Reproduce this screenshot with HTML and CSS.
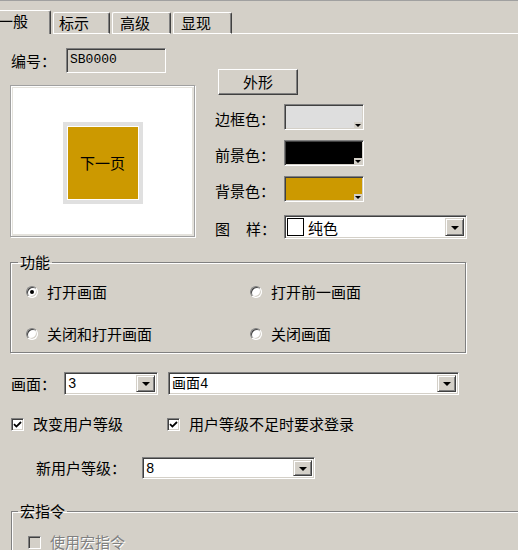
FILE: index.html
```html
<!DOCTYPE html>

<html>
<head>
    <title>按钮属性</title>
    <meta charset="UTF-8">
    <link rel="stylesheet" href="styles.css">
</head>
<body>

<div class="tabs">
    <div class="tab active">一般</div>
    <div class="tab">标示</div>
    <div class="tab">高级</div>
    <div class="tab">显现</div>
    <div class="tab-rest"></div>
</div>

<div class="page">
    <div class="top">
        <div class="left">
            <div class="id-row">
                <span class="id-label">编号：</span>
                <div class="textbox">SB0000</div>
            </div>
            <div class="preview">
                <div class="canvas">
                    <div class="sample">
                        <div class="sample-face">下一页</div>
                    </div>
                </div>
            </div>
        </div>

        <div class="right">
            <div class="button">外形</div>
            <div class="color-row first">
                <span class="label">边框色：</span>
                <div class="swatch light"><span class="pick"></span></div>
            </div>
            <div class="color-row">
                <span class="label">前景色：</span>
                <div class="swatch black"><span class="pick"></span></div>
            </div>
            <div class="color-row">
                <span class="label">背景色：</span>
                <div class="swatch gold"><span class="pick"></span></div>
            </div>
            <div class="color-row pattern-row">
                <span class="label"><span class="wide">图</span>样：</span>
                <div class="combo pattern">
                    <span class="chip"></span>
                    <span class="value cjk">纯色</span>
                    <span class="drop"></span>
                </div>
            </div>
        </div>
    </div>

    <fieldset class="group func">
        <legend>功能</legend>
        <div class="radios">
            <label class="option"><span class="radio checked"></span>打开画面</label>
            <label class="option"><span class="radio"></span>打开前一画面</label>
            <label class="option"><span class="radio"></span>关闭和打开画面</label>
            <label class="option"><span class="radio"></span>关闭画面</label>
        </div>
    </fieldset>

    <div class="screen-row">
        <span class="screen-label">画面：</span>
        <div class="combo screen-no">
            <span class="value">3</span>
            <span class="drop"></span>
        </div>
        <div class="combo screen-name">
            <span class="value">画面4</span>
            <span class="drop"></span>
        </div>
    </div>

    <div class="checks-row">
        <label class="option check-first">
            <span class="check"><svg width="9" height="9" viewBox="0 0 9 9"><path d="M1 4.2 L3.4 6.6 L8 2" fill="none" stroke="#000" stroke-width="1.8"/></svg></span>
            改变用户等级
        </label>
        <label class="option">
            <span class="check"><svg width="9" height="9" viewBox="0 0 9 9"><path d="M1 4.2 L3.4 6.6 L8 2" fill="none" stroke="#000" stroke-width="1.8"/></svg></span>
            用户等级不足时要求登录
        </label>
    </div>

    <div class="level-row">
        <span class="level-label">新用户等级：</span>
        <div class="combo level">
            <span class="value">8</span>
            <span class="drop"></span>
        </div>
    </div>

    <fieldset class="group macro">
        <legend>宏指令</legend>
        <label class="option disabled">
            <span class="check off"></span>
            使用宏指令
        </label>
    </fieldset>
</div>

</body>
</html>
```

FILE: styles.css
```css
html,
body{
    height: 550px;
    overflow: hidden;
}

body{
    margin: 0;
    background-color: #d4d0c8;
    font-family: "Noto Sans CJK SC", sans-serif;
    font-size: 15px;
    line-height: 16px;
    color: #000;
    border-top: 1px solid #a0a0a0;
}

/* tabs */

.tabs{
    display: flex;
    align-items: flex-end;
    height: 33px;
}

.tab{
    box-sizing: border-box;
    height: 22px;
    padding: 2px 0 0 5px;
    margin-left: 2px;
    border-top: 1px solid #fff;
    border-left: 1px solid #fff;
    border-right: 1px solid #404040;
    border-bottom: 1px solid #fff;
    border-radius: 2px 2px 0 0;
    box-shadow: inset -1px 0 0 #808080;
    width: 57px;
}

.tab:nth-child(3),
.tab:nth-child(4){
    width: 59px;
    padding-left: 7px;
}

.tab.active{
    height: 24px;
    width: 63px;
    margin-left: -12px;
    padding-left: 9px;
    border-bottom: none;
}

.tab-rest{
    flex: 1;
    border-bottom: 1px solid #fff;
}

/* 3D frames */

.textbox,
.swatch,
.combo{
    box-sizing: border-box;
    border: 1px solid;
    border-color: #808080 #fff #fff #808080;
    box-shadow: inset 1px 1px 0 #404040, inset -1px -1px 0 #d4d0c8;
}

.button{
    box-sizing: border-box;
    border: 1px solid;
    border-color: #fff #404040 #404040 #fff;
    box-shadow: inset -1px -1px 0 #808080;
}

/* top part */

.top{
    display: flex;
    align-items: flex-start;
}

.left{
    margin-left: 10px;
    width: 186px;
}

.id-row{
    display: flex;
    align-items: center;
    margin-top: 14px;
    height: 25px;
}

.id-label{
    width: 55px;
    padding-left: 1px;
}

.textbox{
    width: 100px;
    height: 25px;
    padding: 3px 0 0 3px;
    font-family: "Liberation Mono", monospace;
    font-size: 13px;
}

.preview{
    box-sizing: border-box;
    margin-top: 12px;
    width: 185px;
    height: 152px;
    padding: 2px;
    border: 1px solid #a0a0a0;
    box-shadow: 1px 1px 0 #fff, inset 1px 1px 0 #fff;
    background-color: #e4e2dc;
}

.canvas{
    display: flex;
    align-items: center;
    justify-content: center;
    height: 100%;
    background-color: #fff;
    padding-top: 4px;
    box-sizing: border-box;
}

.sample{
    width: 80px;
    height: 82px;
    padding: 4px;
    box-sizing: border-box;
    background-color: #e0e0e0;
}

.sample-face{
    display: flex;
    align-items: center;
    justify-content: center;
    height: 100%;
    border: 1px solid #fff;
    background-color: #cc9900;
    box-sizing: border-box;
}

.right{
    margin-left: 19px;
}

.button{
    margin: 35px 0 0 3px;
    width: 80px;
    height: 26px;
    line-height: 24px;
    text-align: center;
}

.color-row{
    display: flex;
    align-items: center;
    margin-top: 10px;
    height: 26px;
}

.color-row.first{
    margin-top: 9px;
}

.color-row.pattern-row{
    margin-top: 13px;
    height: 24px;
}

.label{
    width: 69px;
    padding-top: 3px;
}

.wide{
    margin-right: 16px;
}

.swatch{
    position: relative;
    width: 80px;
    height: 26px;
}

.swatch.light{ background-color: #dedede; }
.swatch.black{ background-color: #000; }
.swatch.gold{ background-color: #cc9900; }

.pick{
    position: absolute;
    right: 1px;
    bottom: 1px;
    width: 8px;
    height: 6px;
    background-color: #d4d0c8;
}

.pick::after{
    content: "";
    position: absolute;
    left: 1px;
    top: 2px;
    border-top: 3px solid #000;
    border-left: 3px solid transparent;
    border-right: 3px solid transparent;
}

/* combo boxes */

.combo{
    display: flex;
    height: 23px;
    padding: 2px;
    background-color: #fff;
}

.combo .value{
    flex: 1;
    padding-left: 1px;
    line-height: 19px;
    font-family: "Liberation Mono", "Noto Sans CJK SC", monospace;
    font-size: 14px;
}

.combo .value.cjk{
    font-family: "Noto Sans CJK SC", sans-serif;
    font-size: 15px;
    padding-left: 4px;
}

.drop{
    display: flex;
    align-items: center;
    justify-content: center;
    box-sizing: border-box;
    width: 19px;
    background-color: #d4d0c8;
    border: 1px solid;
    border-color: #d4d0c8 #404040 #404040 #d4d0c8;
    box-shadow: inset 1px 1px 0 #fff, inset -1px -1px 0 #808080;
}

.drop::after{
    content: "";
    margin-top: 1px;
    border-top: 4px solid #000;
    border-left: 4px solid transparent;
    border-right: 4px solid transparent;
}

.combo.pattern{
    width: 183px;
    height: 24px;
}

.chip{
    box-sizing: border-box;
    width: 17px;
    border: 1px solid #000;
    background-color: #fff;
}

/* group boxes */

.group{
    margin: 0;
    padding: 0;
    border: 1px solid #808080;
    box-shadow: inset 1px 1px 0 #fff, 1px 1px 0 #fff;
}

.group legend{
    padding: 0 2px;
    line-height: 16px;
}

.func{
    box-sizing: border-box;
    margin: 15px 0 0 10px;
    width: 456px;
    padding: 0 0 8px 7px;
}

.radios{
    display: grid;
    grid-template-columns: 224px 200px;
    grid-auto-rows: 20px;
    row-gap: 22px;
    margin: 12px 0 0 8px;
}

.option{
    display: flex;
    align-items: center;
    gap: 9px;
    height: 20px;
}

.radio{
    position: relative;
    box-sizing: border-box;
    width: 12px;
    height: 12px;
    border-radius: 50%;
    border: 1px solid;
    border-color: #808080 #fff #fff #808080;
    box-shadow: inset 1px 1px 0 #404040, inset -1px -1px 0 #d4d0c8;
    background-color: #fff;
}

.radio.checked::after{
    content: "";
    position: absolute;
    left: 3px;
    top: 3px;
    width: 4px;
    height: 4px;
    border-radius: 50%;
    background-color: #000;
}

.check{
    display: flex;
    align-items: center;
    justify-content: center;
    box-sizing: border-box;
    width: 13px;
    height: 13px;
    border: 1px solid;
    border-color: #808080 #fff #fff #808080;
    box-shadow: inset 1px 1px 0 #404040, inset -1px -1px 0 #d4d0c8;
    background-color: #fff;
}

.check.off{
    background-color: #d4d0c8;
}

.disabled{
    color: #808080;
    text-shadow: 1px 1px 0 #fff;
}

/* lower rows */

.screen-row{
    display: flex;
    align-items: center;
    margin: 19px 0 0 11px;
}

.screen-label{
    width: 53px;
}

.screen-no{
    width: 94px;
}

.screen-name{
    margin-left: 10px;
    width: 291px;
}

.checks-row{
    display: flex;
    margin: 19px 0 0 11px;
}

.check-first{
    width: 156px;
}

.level-row{
    display: flex;
    align-items: center;
    margin-top: 23px;
}

.level-label{
    box-sizing: border-box;
    width: 142px;
    padding-left: 36px;
}

.combo.level{
    width: 173px;
    height: 22px;
}

.macro{
    margin: 24px 0 0 11px;
    width: 600px;
    height: 120px;
    padding: 0 0 0 6px;
}

.macro .option{
    margin: 13px 0 0 10px;
    gap: 9px;
}
```
